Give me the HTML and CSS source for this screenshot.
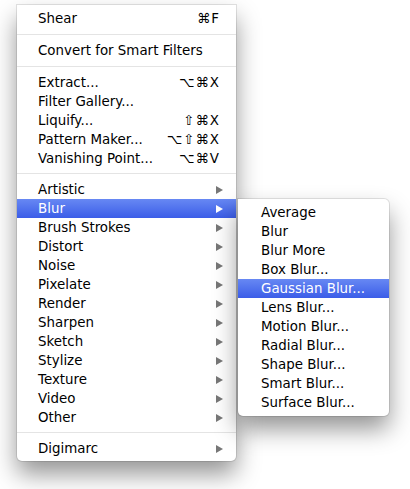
FILE: index.html
```html
<!DOCTYPE html>
<html>
<head>
<meta charset="utf-8">
<link rel="stylesheet" href="styles.css">
</head>
<body>
<div class="stage">
  <div class="menu main">
    <div class="item"><span class="label">Shear</span><span class="key">⌘F</span></div>
    <div class="sep"></div>
    <div class="item"><span class="label">Convert for Smart Filters</span></div>
    <div class="sep"></div>
    <div class="item"><span class="label">Extract...</span><span class="key">⌥⌘X</span></div>
    <div class="item"><span class="label">Filter Gallery...</span></div>
    <div class="item"><span class="label">Liquify...</span><span class="key">⇧⌘X</span></div>
    <div class="item"><span class="label">Pattern Maker...</span><span class="key">⌥⇧⌘X</span></div>
    <div class="item"><span class="label">Vanishing Point...</span><span class="key">⌥⌘V</span></div>
    <div class="sep sep-b"></div>
    <div class="item sub"><span class="label">Artistic</span><span class="arrow"></span></div>
    <div class="item sub active"><span class="label">Blur</span><span class="arrow"></span></div>
    <div class="item sub"><span class="label">Brush Strokes</span><span class="arrow"></span></div>
    <div class="item sub"><span class="label">Distort</span><span class="arrow"></span></div>
    <div class="item sub"><span class="label">Noise</span><span class="arrow"></span></div>
    <div class="item sub"><span class="label">Pixelate</span><span class="arrow"></span></div>
    <div class="item sub"><span class="label">Render</span><span class="arrow"></span></div>
    <div class="item sub"><span class="label">Sharpen</span><span class="arrow"></span></div>
    <div class="item sub"><span class="label">Sketch</span><span class="arrow"></span></div>
    <div class="item sub"><span class="label">Stylize</span><span class="arrow"></span></div>
    <div class="item sub"><span class="label">Texture</span><span class="arrow"></span></div>
    <div class="item sub"><span class="label">Video</span><span class="arrow"></span></div>
    <div class="item sub"><span class="label">Other</span><span class="arrow"></span></div>
    <div class="sep sep-b"></div>
    <div class="item sub"><span class="label">Digimarc</span><span class="arrow"></span></div>
  </div>
  <div class="menu submenu">
    <div class="item"><span class="label">Average</span></div>
    <div class="item"><span class="label">Blur</span></div>
    <div class="item"><span class="label">Blur More</span></div>
    <div class="item"><span class="label">Box Blur...</span></div>
    <div class="item active"><span class="label">Gaussian Blur...</span></div>
    <div class="item"><span class="label">Lens Blur...</span></div>
    <div class="item"><span class="label">Motion Blur...</span></div>
    <div class="item"><span class="label">Radial Blur...</span></div>
    <div class="item"><span class="label">Shape Blur...</span></div>
    <div class="item"><span class="label">Smart Blur...</span></div>
    <div class="item"><span class="label">Surface Blur...</span></div>
  </div>
</div>
</body>
</html>
```
FILE: styles.css
```css
html, body {
  margin: 0;
  padding: 0;
  background: #ffffff;
}
body {
  font-family: "DejaVu Sans", "Noto Sans", sans-serif;
  font-size: 13.4px;
  color: #000;
}
.stage {
  position: relative;
  width: 410px;
  height: 489px;
  overflow: hidden;
}
.menu {
  background: #ffffff;
  box-shadow: 0 13px 24px rgba(0, 0, 0, 0.42), 0 0 0 1px rgba(0, 0, 0, 0.10);
}
.main {
  margin: 5px 0 0 17px;
  width: 219px;
  padding: 4px 0 3px;
  border-radius: 0 0 5px 5px;
}
.submenu {
  position: absolute;
  left: 238px;
  top: 199px;
  width: 151px;
  padding: 4px 0;
  border-radius: 0 5px 5px 5px;
}
.item {
  display: flex;
  align-items: center;
  height: 19px;
  line-height: 19px;
  padding: 0 17px 0 21px;
  white-space: nowrap;
}
.item .label {
  flex: 1;
}
.submenu .item {
  padding-left: 23px;
}
.item.sub {
  padding-right: 13px;
}
.key {
  letter-spacing: 1px;
  margin-right: -1px;
}
.arrow {
  width: 0;
  height: 0;
  border-left: 7px solid #777777;
  border-top: 4.5px solid transparent;
  border-bottom: 4.5px solid transparent;
}
.active {
  background: linear-gradient(#6788f3, #3b5de8);
  color: #fff;
}
.active .arrow {
  border-left-color: #fff;
}
.sep {
  height: 1px;
  background: #e4e4e4;
  margin: 6px 0;
}
.sep-b {
  margin: 5px 0 6px;
}
```
